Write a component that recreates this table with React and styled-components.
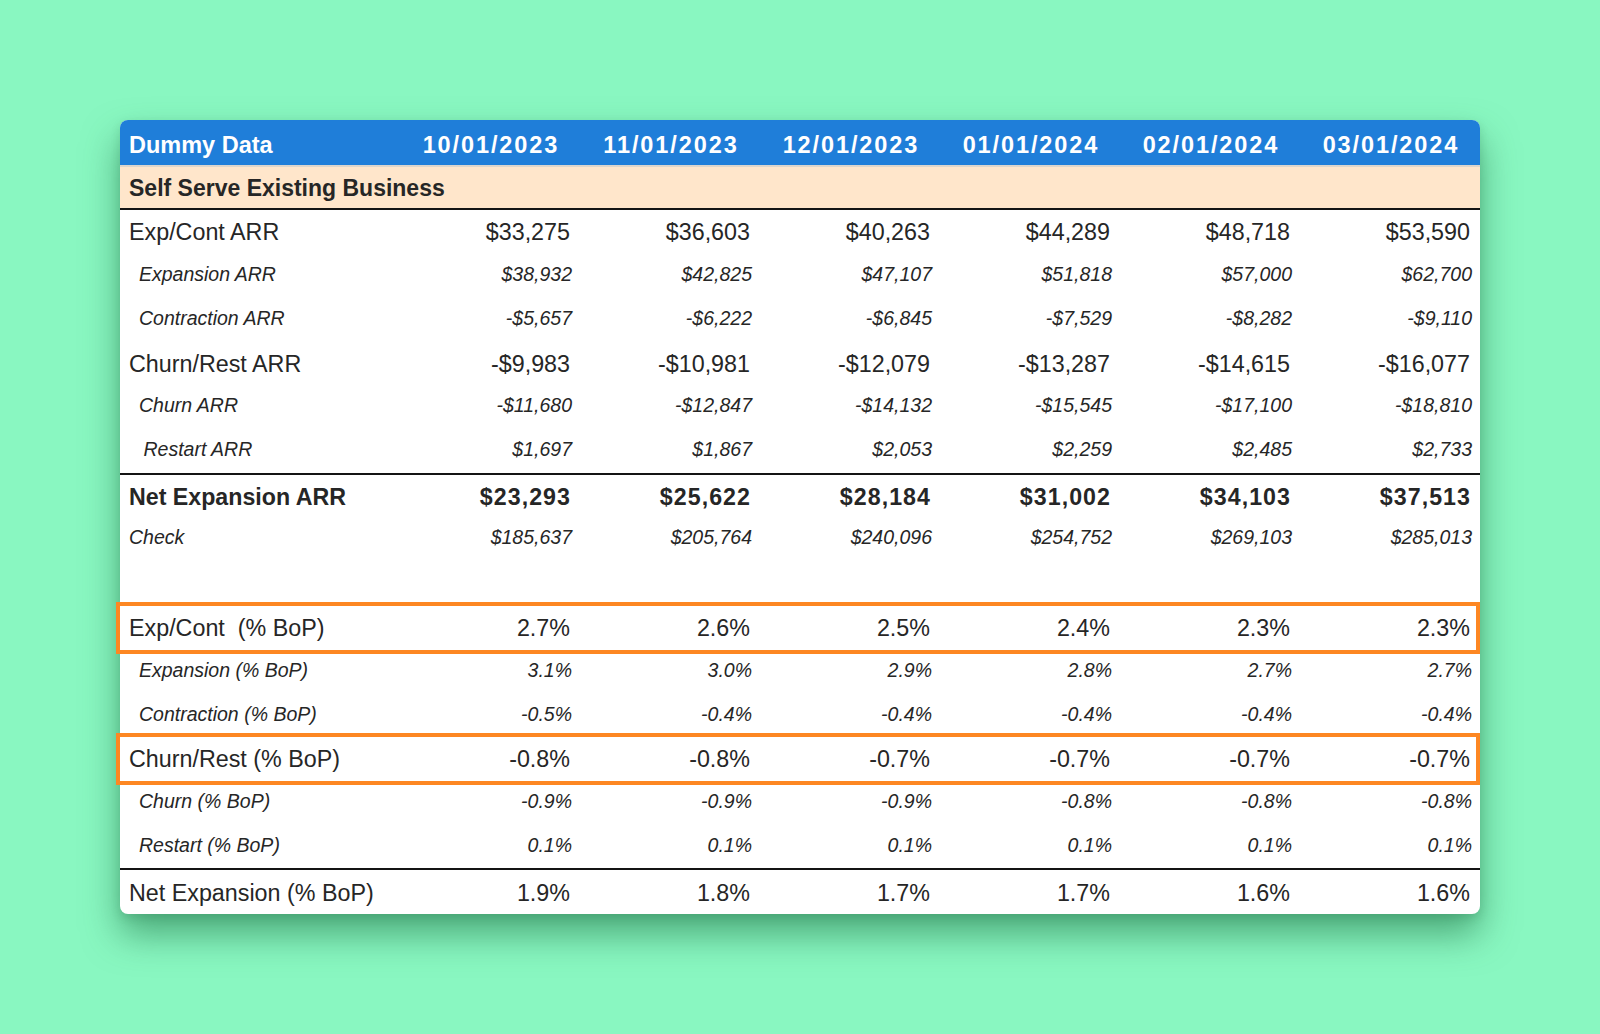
import React from "react";
import styled, { createGlobalStyle, css } from "styled-components";

const Global = createGlobalStyle`
  html, body { margin: 0; padding: 0; }
  body {
    background: #89f7c1;
    font-family: "Liberation Sans", Arial, Helvetica, sans-serif;
    color: #262626;
  }
`;

const Page = styled.div`
  min-height: 1034px;
  box-sizing: border-box;
  padding: 120px 0 0 120px;
  display: flex;
  align-items: flex-start;
`;

const Card = styled.div`
  width: 1360px;
  background: #ffffff;
  border-radius: 8px;
  box-shadow: 0 20px 36px rgba(25, 105, 62, 0.55), 0 4px 10px rgba(20, 80, 50, 0.15);
  display: flex;
  flex-direction: column;
`;

const cols = css`
  display: grid;
  grid-template-columns: 280px repeat(6, 180px);
`;

const HeaderRow = styled.div`
  ${cols};
  height: 45px;
  background: #1f7ed9;
  border-radius: 8px 8px 0 0;
  border-bottom: 2px solid #dcd5cc;
  color: #ffffff;
  font-weight: 700;
  font-size: 23.5px;
`;

const HeaderLabel = styled.div`
  display: flex;
  align-items: center;
  padding: 6px 0 0 9px;
`;

const HeaderDate = styled.div`
  display: flex;
  align-items: center;
  justify-content: center;
  padding: 6px 0 0 1.9px;
  letter-spacing: 1.9px;
`;

const SectionRow = styled.div`
  height: 43px;
  box-sizing: border-box;
  padding: 1px 0 0 9px;
  background: #ffe6cb;
  border-bottom: 2px solid #141414;
  display: flex;
  align-items: center;
  font-size: 23px;
  font-weight: 700;
  color: #262626;
`;

const DataRow = styled.div`
  ${cols};
  position: relative;
  height: ${(p) => (p.$last ? "43.5px" : "43.75px")};
  ${(p) => p.$divider && css`border-top: 2px solid #141414;`}
  ${(p) =>
    p.$last &&
    css`
      border-radius: 0 0 8px 8px;
    `}
  ${(p) =>
    p.$highlight &&
    css`
      &::after {
        content: "";
        position: absolute;
        top: -4px;
        bottom: -4px;
        left: -4px;
        right: 0;
        border: 4px solid #fd8722;
        pointer-events: none;
      }
    `}
`;

const kindStyles = {
  main: css`
    font-size: 23.3px;
    font-weight: 400;
    padding-top: 2px;
  `,
  bold: css`
    font-size: 23.2px;
    font-weight: 700;
    padding-top: 2px;
  `,
  sub: css`
    font-size: 19.5px;
    font-style: italic;
    padding-bottom: 2px;
  `,
  check: css`
    font-size: 19.5px;
    font-style: italic;
    padding-bottom: 5px;
  `,
};

const Label = styled.div`
  display: flex;
  align-items: center;
  padding-left: ${(p) => p.$indent}px;
  color: #262626;
  white-space: pre;
  ${(p) => kindStyles[p.$kind]};
`;

const valuePad = { main: 10, bold: 9, sub: 8, check: 8 };

const Value = styled.div`
  display: flex;
  align-items: center;
  justify-content: flex-end;
  color: #262626;
  ${(p) => kindStyles[p.$kind]};
  padding-right: ${(p) => valuePad[p.$kind]}px;
  ${(p) => p.$kind === "bold" && css`letter-spacing: 1.05px;`}
`;

const dates = ["10/01/2023", "11/01/2023", "12/01/2023", "01/01/2024", "02/01/2024", "03/01/2024"];

const rows = [
  { label: "Exp/Cont ARR", kind: "main", indent: 9, values: ["$33,275", "$36,603", "$40,263", "$44,289", "$48,718", "$53,590"] },
  { label: "Expansion ARR", kind: "sub", indent: 19, values: ["$38,932", "$42,825", "$47,107", "$51,818", "$57,000", "$62,700"] },
  { label: "Contraction ARR", kind: "sub", indent: 19, values: ["-$5,657", "-$6,222", "-$6,845", "-$7,529", "-$8,282", "-$9,110"] },
  { label: "Churn/Rest ARR", kind: "main", indent: 9, values: ["-$9,983", "-$10,981", "-$12,079", "-$13,287", "-$14,615", "-$16,077"] },
  { label: "Churn ARR", kind: "sub", indent: 19, values: ["-$11,680", "-$12,847", "-$14,132", "-$15,545", "-$17,100", "-$18,810"] },
  { label: "Restart ARR", kind: "sub", indent: 23.5, values: ["$1,697", "$1,867", "$2,053", "$2,259", "$2,485", "$2,733"] },
  { label: "Net Expansion ARR", kind: "bold", indent: 9, divider: true, values: ["$23,293", "$25,622", "$28,184", "$31,002", "$34,103", "$37,513"] },
  { label: "Check", kind: "check", indent: 9, values: ["$185,637", "$205,764", "$240,096", "$254,752", "$269,103", "$285,013"] },
  { label: "", kind: "main", indent: 9, values: ["", "", "", "", "", ""] },
  { label: "Exp/Cont  (% BoP)", kind: "main", indent: 9, highlight: true, values: ["2.7%", "2.6%", "2.5%", "2.4%", "2.3%", "2.3%"] },
  { label: "Expansion (% BoP)", kind: "sub", indent: 19, values: ["3.1%", "3.0%", "2.9%", "2.8%", "2.7%", "2.7%"] },
  { label: "Contraction (% BoP)", kind: "sub", indent: 19, values: ["-0.5%", "-0.4%", "-0.4%", "-0.4%", "-0.4%", "-0.4%"] },
  { label: "Churn/Rest (% BoP)", kind: "main", indent: 9, highlight: true, values: ["-0.8%", "-0.8%", "-0.7%", "-0.7%", "-0.7%", "-0.7%"] },
  { label: "Churn (% BoP)", kind: "sub", indent: 19, values: ["-0.9%", "-0.9%", "-0.9%", "-0.8%", "-0.8%", "-0.8%"] },
  { label: "Restart (% BoP)", kind: "sub", indent: 19, values: ["0.1%", "0.1%", "0.1%", "0.1%", "0.1%", "0.1%"] },
  { label: "Net Expansion (% BoP)", kind: "main", indent: 9, divider: true, last: true, values: ["1.9%", "1.8%", "1.7%", "1.7%", "1.6%", "1.6%"] },
];

export default function App() {
  return (
    <>
      <Global />
      <Page>
        <Card>
          <HeaderRow>
            <HeaderLabel>Dummy Data</HeaderLabel>
            {dates.map((d) => (
              <HeaderDate key={d}>{d}</HeaderDate>
            ))}
          </HeaderRow>
          <SectionRow>Self Serve Existing Business</SectionRow>
          {rows.map((r, i) => (
            <DataRow key={i} $divider={r.divider} $highlight={r.highlight} $last={r.last}>
              <Label $kind={r.kind} $indent={r.indent}>{r.label}</Label>
              {r.values.map((v, j) => (
                <Value key={j} $kind={r.kind}>{v}</Value>
              ))}
            </DataRow>
          ))}
        </Card>
      </Page>
    </>
  );
}
